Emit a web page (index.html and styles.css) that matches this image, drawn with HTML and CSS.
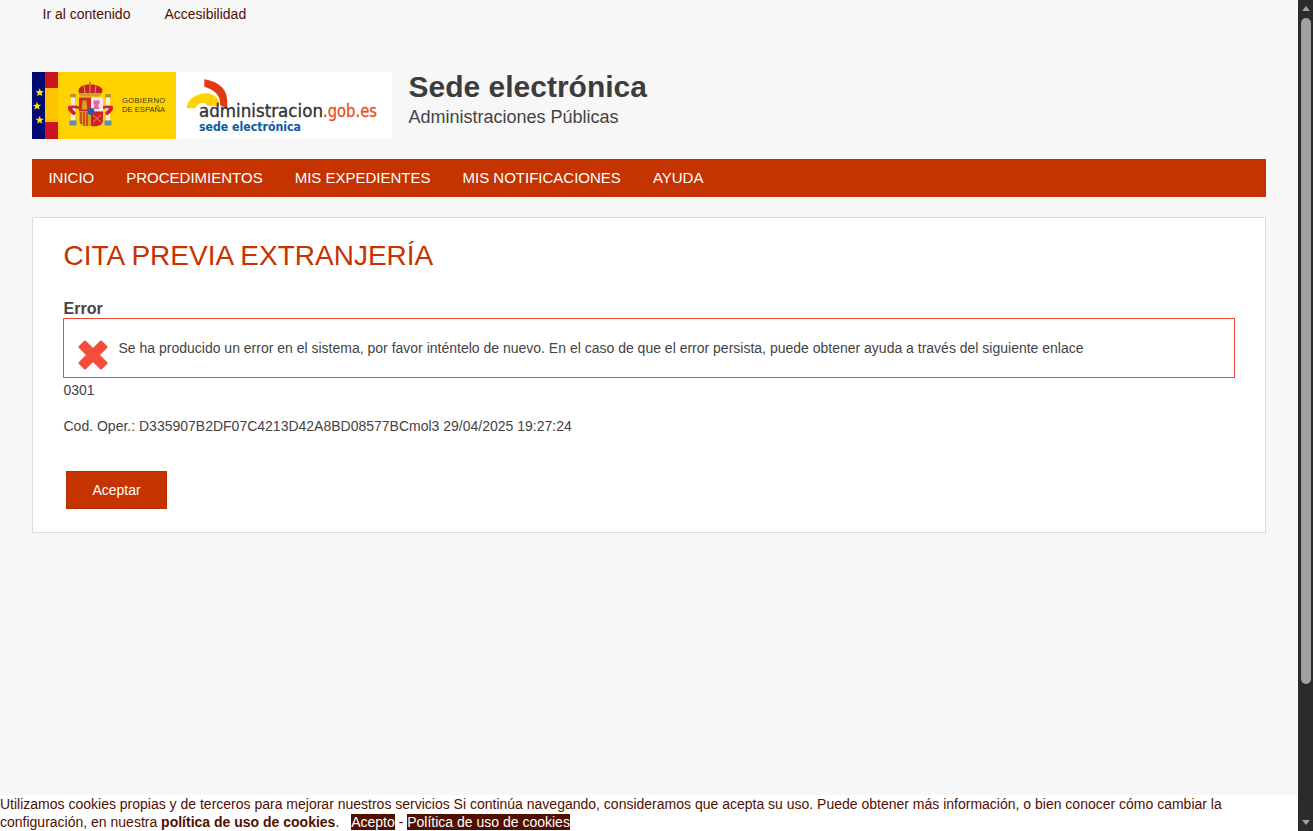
FILE: index.html
```html
<!DOCTYPE html>
<html lang="es">
<head>
<meta charset="utf-8">
<title>Sede electrónica</title>
<link rel="stylesheet" href="styles.css">
</head>
<body>
<div class="screen">
  <div class="viewport">
    <nav class="skip">
      <a href="#c">Ir al contenido</a>
      <a href="#a">Accesibilidad</a>
    </nav>
    <header class="masthead">
      <svg class="logo" width="360" height="67" viewBox="0 0 360 67">
        <rect width="360" height="67" fill="#fff"/>
        <rect width="144" height="67" fill="#ffd200"/>
        <rect width="13" height="67" fill="#000a70"/>
        <rect x="13" width="13" height="67" fill="#cc1420"/>
        <rect x="13" y="16" width="13" height="34" fill="#ffc400"/>
        <g fill="#ffe600">
          <path d="M7.700 16.200l1.100 2.900 3.100.1-2.400 1.900.8 3-2.600-1.700-2.600 1.700.8-3-2.400-1.900 3.100-.1z"/>
          <path d="M5 29.800l1.100 2.900 3.100.1-2.400 1.900.8 3L5 36.100l-2.600 1.700.8-3-2.400-1.900 3.100-.1z"/>
          <path d="M7.700 43.800l1.100 2.900 3.100.1-2.400 1.900.8 3-2.600-1.700-2.600 1.700.8-3-2.400-1.900 3.100-.1z"/>
        </g>
        <g>
          <path d="M58 9.500v4" stroke="#b08a1e" stroke-width="1.600"/>
          <path d="M46.500 19c0-4 4-6.500 11.500-6.500S70.500 15 70.500 19l-2 3.500h-21z" fill="#c91f2b"/>
          <path d="M47 21h22l-1 3.500H48z" fill="#c9a227"/>
          <path d="M52 13l1 8M58 12.500V21M64 13l-1 8" stroke="#d8a92a" stroke-width="1"/>
          <rect x="38" y="22" width="6" height="3.500" fill="#b9962b"/>
          <rect x="39" y="25.500" width="4" height="23" fill="#eeeeee"/>
          <rect x="37.500" y="48.500" width="7" height="5" fill="#5f8fa8"/>
          <rect x="73" y="22" width="6" height="3.500" fill="#b9962b"/>
          <rect x="74" y="25.500" width="4" height="23" fill="#eeeeee"/>
          <rect x="72.500" y="48.500" width="7" height="5" fill="#5f8fa8"/>
          <path d="M36 34.500c3-1.500 7-1.500 11 0v2.500c-3-1-5-1-7-.5 1 1 2.500 3 4 4.500l-2 2.500c-3-2-6-5-6-7z" fill="#d3202c"/>
          <path d="M81 34.500c-3-1.500-7-1.500-11 0v2.500c3-1 5-1 7-.5-1 1-2.500 3-4 4.500l2 2.500c3-2 6-5 6-7z" fill="#d3202c"/>
          <path d="M47 25.500h12v14H47z" fill="#d62828"/>
          <path d="M59 25.500h12v14H59z" fill="#f4e6e8"/>
          <path d="M47 39.500h12V54c-5 1-12 0-12-6z" fill="#d9a21b"/>
          <path d="M59 39.500h12V48c0 6-7 7-12 6z" fill="#cf2030"/>
          <path d="M61.500 28.500h6v3l-1.500 2 1.500 3.500H61l1.500-3.500-1-2z" fill="#d86aa0"/>
          <path d="M50.500 28.500h4l.8 9h-5.600z" fill="#d9a21b"/>
          <path d="M49 40v12M52 40v14M55 40v14" stroke="#c22a2a" stroke-width="1.300"/>
          <path d="M61 43l8 7M69 43l-8 7" stroke="#d9a21b" stroke-width="1"/>
          <circle cx="59" cy="39.500" r="3.400" fill="#2a5aa8"/>
        </g>
        <text class="gob" x="90" y="31.300" textLength="43" lengthAdjust="spacing">GOBIERNO</text>
        <text class="gob" x="90" y="39.800" textLength="43" lengthAdjust="spacing">DE ESPAÑA</text>
        <path d="M172.300 7.300c13 2 23 9 23 22v7l-7.300-3c1.500-9-6-16-15.700-18.500z" fill="#e03a12"/>
        <path d="M154.700 36.300c.5-8 8-15 20-15 6 0 10 3.500 13 9l-1 3.500h-11c-2-2.500-3.500-3-5.500-2.700-3 .5-5 2-7.200 5.200z" fill="#ffd200"/>
        <text class="adm" x="167" y="44.500" textLength="124" lengthAdjust="spacingAndGlyphs">administracion</text>
        <text class="gobes" x="291" y="44.500" textLength="54" lengthAdjust="spacingAndGlyphs">.gob.es</text>
        <text class="sede" x="167" y="59" textLength="102" lengthAdjust="spacingAndGlyphs">sede electrónica</text>
      </svg>
      <div class="heading">
        <div class="site-title">Sede electrónica</div>
        <div class="site-sub">Administraciones Públicas</div>
      </div>
    </header>
    <nav class="mainnav">
      <a href="#i">Inicio</a>
      <a href="#p">Procedimientos</a>
      <a href="#e">Mis expedientes</a>
      <a href="#n">Mis notificaciones</a>
      <a href="#h">Ayuda</a>
    </nav>
    <main class="panel">
      <h1 class="panel-title">CITA PREVIA EXTRANJERÍA</h1>
      <h2 class="error-label">Error</h2>
      <div class="error-box">
        <svg class="error-icon" width="30" height="30" viewBox="0 0 30 30">
          <path d="M7 2 15 10 23 2 28 7 20 15 28 23 23 28 15 20 7 28 2 23 10 15 2 7z" fill="#f44e3b" stroke="#f44e3b" stroke-width="3" stroke-linejoin="round"/>
        </svg>
        <span>Se ha producido un error en el sistema, por favor inténtelo de nuevo. En el caso de que el error persista, puede obtener ayuda a través del siguiente enlace</span>
      </div>
      <p class="code">0301</p>
      <p class="oper">Cod. Oper.: D335907B2DF07C4213D42A8BD08577BCmol3 29/04/2025 19:27:24</p>
      <button class="accept" type="button">Aceptar</button>
    </main>
    <aside class="cookies">
      Utilizamos cookies propias y de terceros para mejorar nuestros servicios Si continúa navegando, consideramos que acepta su uso. Puede obtener más información, o bien conocer cómo cambiar la configuración, en nuestra <b>política de uso de cookies</b>. &nbsp; <a class="cookie-ok" href="#ok">Acepto</a> - <a href="#pol">Política de uso de cookies</a>
    </aside>
  </div>
  <div class="scrollbar">
    <span class="arrow-up"></span>
    <span class="thumb"></span>
    <span class="arrow-down"></span>
  </div>
</div>
</body>
</html>
```
FILE: styles.css
```css
* { box-sizing: border-box; }
html, body { margin: 0; height: 100%; overflow: hidden; }
body { font-family: "Liberation Sans", Arial, sans-serif; font-size: 14px; color: #444; background: #f7f7f7; }
a { text-decoration: none; color: inherit; }
.screen { display: flex; height: 831px; }
.viewport { position: relative; width: 1298px; flex: none; padding: 0 32px; overflow: hidden; }
.skip { display: flex; gap: 34px; height: 28px; padding-left: 10.500px; align-items: center; color: #501000; font-size: 14px; }
.masthead { display: flex; margin-top: 44px; height: 67px; gap: 16.500px; }
.logo { display: block; flex: none; }
.gob { font: 7.500px "Liberation Sans", sans-serif; fill: #3d3a20; }
.adm { font: 17px "DejaVu Sans", sans-serif; fill: #333; stroke: #333; stroke-width: 0.350px; }
.gobes { font: 17px "DejaVu Sans", sans-serif; fill: #ee4f23; stroke: #ee4f23; stroke-width: 0.350px; }
.sede { font: bold 12px "DejaVu Sans", sans-serif; fill: #0b5aa6; }
.heading { display: flex; flex-direction: column; }
.site-title { font-size: 30px; font-weight: bold; line-height: 30px; color: #3c3c3c; }
.site-sub { font-size: 18px; line-height: 21px; margin-top: 5px; color: #444; }
.mainnav { display: flex; height: 38px; margin-top: 20px; padding: 0 0 2px 0.420px; background: #c43300; align-items: center; color: #fff; font-size: 15px; text-transform: uppercase; }
.mainnav a { padding: 0 16px; }
.panel { margin-top: 20px; height: 316px; background: #fff; border: 1px solid #ddd; padding: 0 30px 0 30.500px; }
.panel-title { margin: 0; padding-top: 22px; font-size: 28px; line-height: 32px; font-weight: normal; color: #c43300; }
.error-label { margin: 28px 0 0; font-size: 16px; line-height: 18px; font-weight: bold; color: #444; }
.error-box { display: flex; align-items: center; gap: 10.500px; height: 60px; margin: 0 0 0 -0.500px; padding: 0 14px; border: 1px solid #ee4a38; font-size: 14px; color: #444; }
.error-icon { flex: none; margin-top: 13px; }
.error-box span { margin-top: -1px; }
.code { margin: 4px 0 0; line-height: 16px; }
.oper { margin: 20px 0 0; line-height: 16px; }
.accept { display: block; width: 101px; height: 38px; margin: 37px 0 0 2.500px; background: #c43300; border: 1px solid #b52f00; color: #fff; font: 14px "Liberation Sans", sans-serif; }
.cookies { position: absolute; left: 0; right: 0; top: 795px; height: 36px; background: #fff; color: #501000; font-size: 14px; line-height: 18px; }
.cookies a { background: #501000; color: #fff; }
.cookies .cookie-ok { margin-left: 0.250px; }
.scrollbar { position: relative; width: 15px; flex: none; background: #2b2b2b; display: flex; flex-direction: column; align-items: center; }
.thumb { width: 10px; height: 666px; margin-top: 7px; background: #a0a0a0; border-radius: 5px; }
.arrow-up { margin-top: 6px; width: 0; height: 0; border: 4.500px solid transparent; border-top: 0; border-bottom: 5px solid #a0a0a0; }
.arrow-down { position: absolute; bottom: 6px; width: 0; height: 0; border: 4.500px solid transparent; border-bottom: 0; border-top: 5px solid #a0a0a0; }
```
